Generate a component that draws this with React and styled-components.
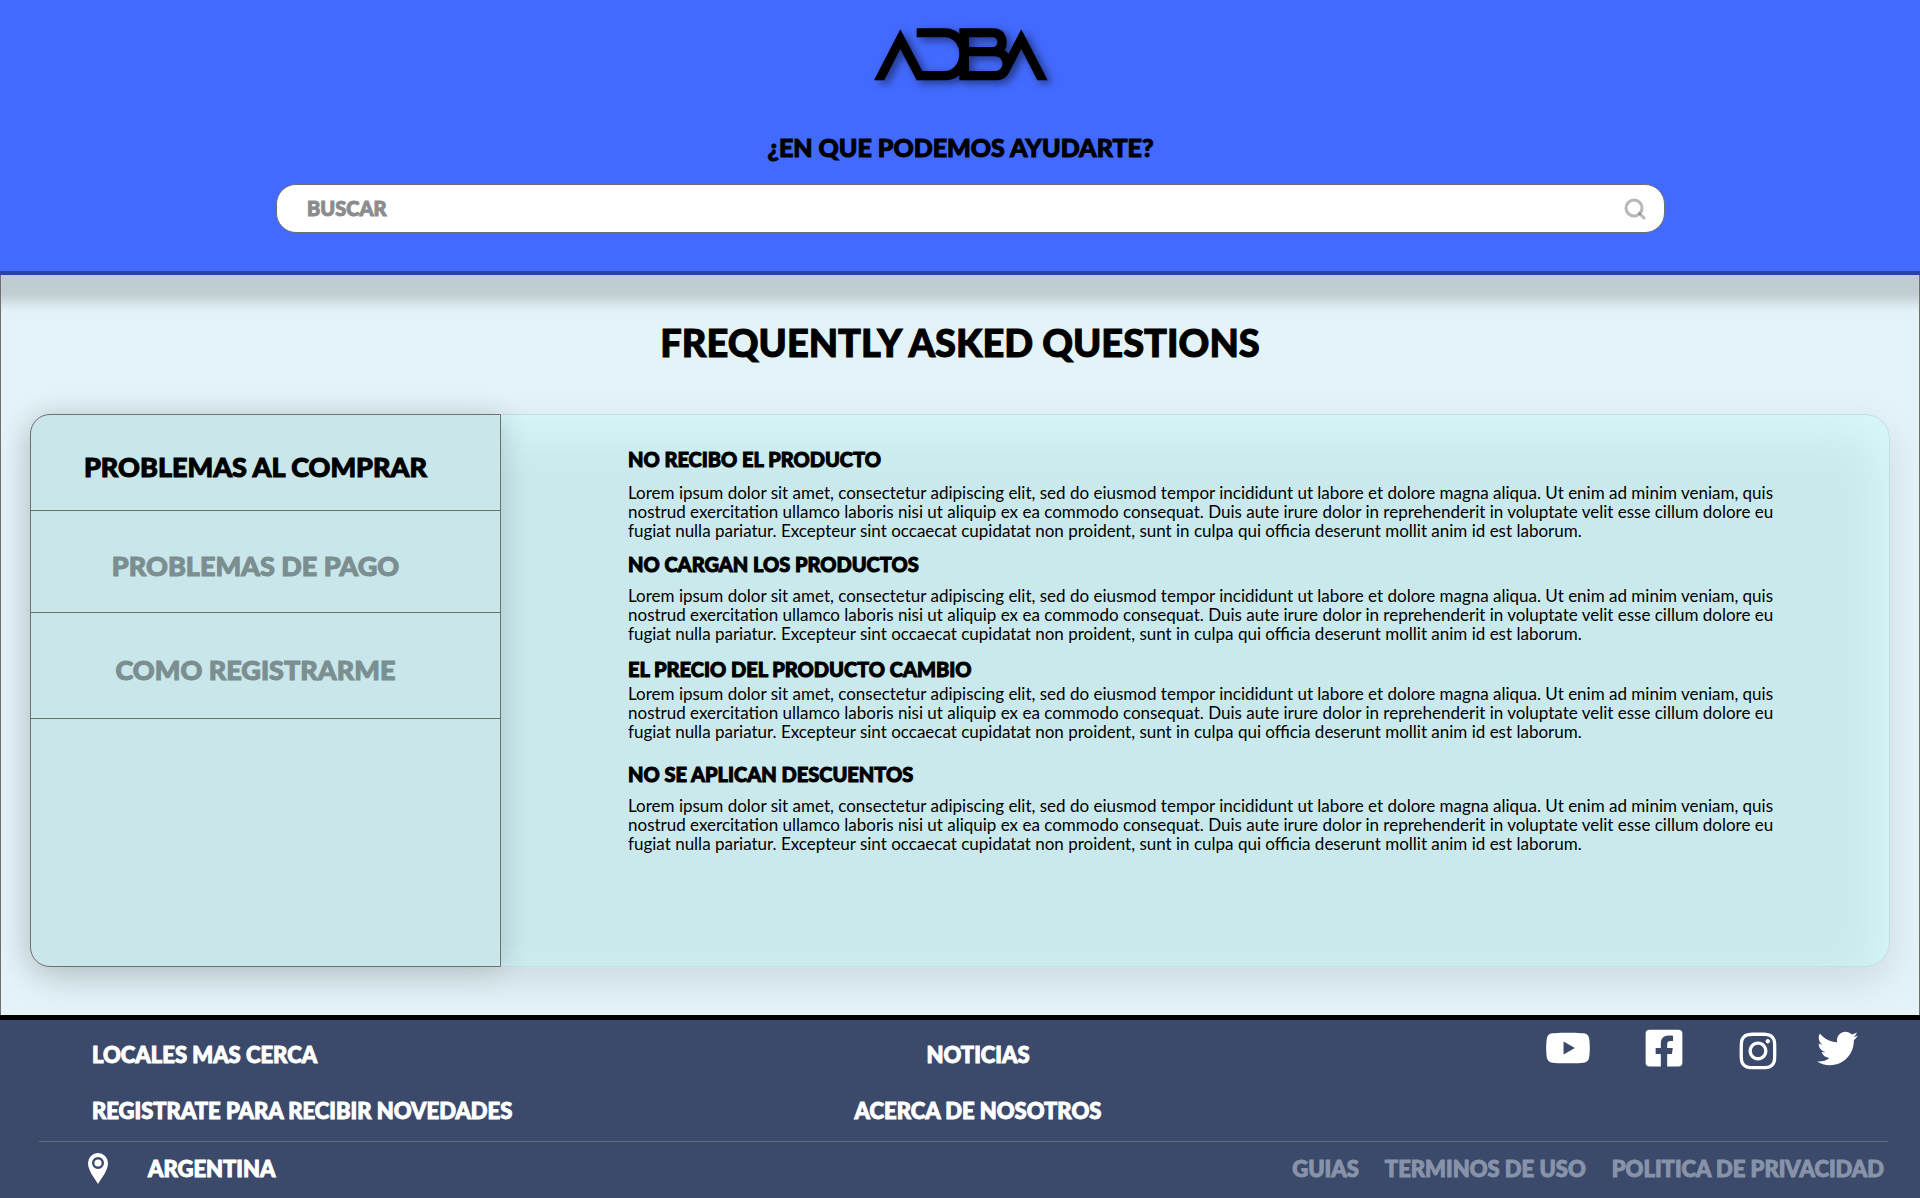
import React from "react";
import styled, { createGlobalStyle, css } from "styled-components";
import { FaYoutube, FaFacebookSquare, FaInstagram, FaTwitter } from "react-icons/fa";

const GlobalStyle = createGlobalStyle`
  * { box-sizing: border-box; }
  body { margin: 0; background: #e4f3f8; color: #000; font-family: Lato, "Open Sans", sans-serif; }
  h1, h2, h3, p { margin: 0; padding: 0; }
`;

const heavy = css`
  font-weight: 900;
  -webkit-text-stroke: 1px currentColor;
`;

const Page = styled.div`
  display: flex;
  flex-direction: column;
  min-height: 100vh;
  overflow-x: hidden;
`;

const Header = styled.header`
  display: flex;
  flex-direction: column;
  align-items: center;
  padding: 21px 255px 38px 276px;
  background: #436aff;
  border-bottom: 4px solid #2a41a5;
  box-shadow: 0 15px 12px 12px rgba(0, 0, 0, 0.16);
`;

const Logo = styled.svg`
  display: block;
  width: 183px;
  height: 67px;
  margin-right: 10px;
  overflow: visible;
  filter: drop-shadow(4px 3px 4px rgba(0, 0, 0, 0.5));
`;

const Prompt = styled.h2`
  ${heavy}
  margin: 43px 20px 0 0;
  font-size: 25px;
  line-height: 32px;
`;

const SearchBox = styled.form`
  display: flex;
  align-items: center;
  width: 100%;
  height: 49px;
  margin-top: 21px;
  padding: 0 18px 0 30px;
  background: #fff;
  border: 1px solid #707070;
  border-radius: 20px;
`;

const SearchInput = styled.input`
  flex: 1;
  min-width: 0;
  border: 0;
  outline: 0;
  padding: 0 0 2px;
  background: transparent;
  font: 20px/24px Lato, sans-serif;
  ${heavy}
  color: #000;
  &::placeholder { color: #8c8c8c; opacity: 1; -webkit-text-stroke: 1px #8c8c8c; }
`;

const SearchButton = styled.button`
  display: flex;
  padding: 0;
  border: 0;
  background: none;
  cursor: pointer;
`;

const Main = styled.main`
  flex: 1;
  padding: 43px 29px 48px;
  border: solid #707070;
  border-width: 0 1px;
`;

const Title = styled.h1`
  ${heavy}
  font-size: 38px;
  line-height: 48px;
  text-align: center;
`;

const Panel = styled.section`
  display: flex;
  min-height: 553px;
  margin-top: 48px;
  border-radius: 25px;
  background: #c9e9ec;
  box-shadow: 0 14px 40px rgba(0, 0, 0, 0.1), inset 0 0 0 1px #c1e0e4, inset -10px 20px 50px #d8f8fa;
`;

const Topics = styled.nav`
  flex: 0 0 471px;
  border: 1px solid #707070;
  border-radius: 20px 0 0 20px;
  background: #c9e6ea;
  box-shadow: 0 3px 30px rgba(0, 0, 0, 0.16);
`;

const Topic = styled.button`
  display: block;
  width: 100%;
  height: ${(p) => p.$height}px;
  padding: 8px 20px 0 0;
  border: 0;
  border-bottom: 1px solid #707070;
  background: none;
  font: 27px/34px Lato, sans-serif;
  ${heavy}
  text-align: center;
  color: ${(p) => (p.$active ? "#000" : "#7b8e90")};
  cursor: pointer;
`;

const Answers = styled.div`
  flex: 1;
  padding: 33px 90px 40px 127px;
`;

const Question = styled.h3`
  ${heavy}
  font-size: 20px;
  line-height: 24px;
`;

const Answer = styled.p`
  font-size: 17px;
  line-height: 19px;
  margin: ${(p) => p.$before}px 0 ${(p) => p.$after}px;
`;

const Footer = styled.footer`
  padding: 4px 32px 6px 39px;
  border-top: 5px solid #000;
  background: #3b4a6b;
  color: #fff;
`;

const FooterTop = styled.div`
  display: grid;
  grid-template-columns: 1fr auto 1fr;
  align-items: start;
  padding: 0 24px 0 53px;
  height: 117px;
`;

const FooterBottom = styled.div`
  display: flex;
  align-items: center;
  justify-content: space-between;
  height: 51px;
  padding: 3px 4px 0 49px;
  border-top: 1px solid #656b79;
`;

const LinkColumn = styled.div`
  display: flex;
  flex-direction: column;
  align-items: ${(p) => (p.$center ? "center" : "flex-start")};
  gap: 32px;
  padding-top: 19px;
`;

const FooterLink = styled.a`
  ${heavy}
  font-size: 22px;
  line-height: 24px;
  text-decoration: none;
  white-space: nowrap;
  color: ${(p) => (p.$muted ? "#8893aa" : "#fff")};
`;

const Country = styled.div`
  display: flex;
  align-items: center;
  gap: 40px;
`;

const Legal = styled.div`
  display: flex;
  gap: 26px;
`;

const Social = styled.div`
  display: flex;
  align-items: center;
  justify-content: flex-end;
  gap: 38px;
  height: 48px;
  padding-right: 6px;
`;

const SocialLink = styled.a`
  display: flex;
  align-self: ${(p) => (p.$low ? "flex-end" : "center")};
  margin-right: ${(p) => (p.$wide ? 14 : 0)}px;
  color: #fff;
`;

const LINES = [
  "Lorem ipsum dolor sit amet, consectetur adipiscing elit, sed do eiusmod tempor incididunt ut labore et dolore magna aliqua. Ut enim ad minim veniam, quis",
  "nostrud exercitation ullamco laboris nisi ut aliquip ex ea commodo consequat. Duis aute irure dolor in reprehenderit in voluptate velit esse cillum dolore eu",
  "fugiat nulla pariatur. Excepteur sint occaecat cupidatat non proident, sunt in culpa qui officia deserunt mollit anim id est laborum.",
];

const FAQ = [
  { q: "NO RECIBO EL PRODUCTO", before: 12, after: 12 },
  { q: "NO CARGAN LOS PRODUCTOS", before: 10, after: 14 },
  { q: "EL PRECIO DEL PRODUCTO CAMBIO", before: 3, after: 21 },
  { q: "NO SE APLICAN DESCUENTOS", before: 10, after: 0 },
];

export default function App() {
  return (
    <Page>
      <GlobalStyle />
      <Header>
        <Logo viewBox="342 63 549 201" role="img" aria-label="ADBA">
          <path
            fillRule="evenodd"
            d="M342 241L421 88L487 213H555C578 213 598 192 598 162C598 132 578 112 555 112H470V85H555C572 85 586 91 598 101V85H700C728 85 740 105 740 128C740 140 737 147 733 151C740 154 743 158 745 162L784 88L863 241H832L784 147L750 212C741 232 728 241 708 241H598V226C585 237 570 241 550 241H470L421 147L373 241ZM627 112V141H698C717 141 717 112 698 112ZM627 169V213H704C735 213 735 169 704 169Z"
          />
        </Logo>
        <Prompt>¿EN QUE PODEMOS AYUDARTE?</Prompt>
        <SearchBox role="search" onSubmit={(e) => e.preventDefault()}>
          <SearchInput type="search" aria-label="Buscar" placeholder="BUSCAR" />
          <SearchButton type="submit" aria-label="Buscar">
            <svg width="22" height="22" viewBox="0 0 22 22" fill="none" stroke="#707070" strokeOpacity="0.5" strokeWidth="3" strokeLinecap="round">
              <circle cx="10" cy="10" r="8" />
              <path d="M15.5 15.5L20 20" />
            </svg>
          </SearchButton>
        </SearchBox>
      </Header>
      <Main>
        <Title>FREQUENTLY ASKED QUESTIONS</Title>
        <Panel>
          <Topics aria-label="Temas">
            <Topic type="button" $height={96} $active>PROBLEMAS AL COMPRAR</Topic>
            <Topic type="button" $height={102}>PROBLEMAS DE PAGO</Topic>
            <Topic type="button" $height={106}>COMO REGISTRARME</Topic>
          </Topics>
          <Answers>
            {FAQ.map((f) => (
              <React.Fragment key={f.q}>
                <Question>{f.q}</Question>
                <Answer $before={f.before} $after={f.after}>
                  {LINES[0]}<br />{LINES[1]}<br />{LINES[2]}
                </Answer>
              </React.Fragment>
            ))}
          </Answers>
        </Panel>
      </Main>
      <Footer>
        <FooterTop>
          <LinkColumn>
            <FooterLink href="#locales">LOCALES MAS CERCA</FooterLink>
            <FooterLink href="#registro">REGISTRATE PARA RECIBIR NOVEDADES</FooterLink>
          </LinkColumn>
          <LinkColumn $center>
            <FooterLink href="#noticias">NOTICIAS</FooterLink>
            <FooterLink href="#nosotros">ACERCA DE NOSOTROS</FooterLink>
          </LinkColumn>
          <Social>
            <SocialLink $wide href="#youtube" aria-label="YouTube"><FaYoutube size={46} /></SocialLink>
            <SocialLink $wide href="#facebook" aria-label="Facebook"><FaFacebookSquare size={42} /></SocialLink>
            <SocialLink $low href="#instagram" aria-label="Instagram"><FaInstagram size={42} /></SocialLink>
            <SocialLink href="#twitter" aria-label="Twitter"><FaTwitter size={41} /></SocialLink>
          </Social>
        </FooterTop>
        <FooterBottom>
          <Country>
            <svg width="20" height="31" viewBox="0 0 20 31" fill="#fff" aria-hidden="true">
              <path fillRule="evenodd" d="M10 0A10 10 0 0 0 0 10C0 17 5 23 10 31C15 23 20 17 20 10A10 10 0 0 0 10 0ZM10 4a6 6 0 1 1 0 12a6 6 0 1 1 0-12Z" />
              <circle cx="10" cy="10" r="3.6" />
            </svg>
            <FooterLink href="#pais">ARGENTINA</FooterLink>
          </Country>
          <Legal>
            <FooterLink $muted href="#guias">GUIAS</FooterLink>
            <FooterLink $muted href="#terminos">TERMINOS DE USO</FooterLink>
            <FooterLink $muted href="#privacidad">POLITICA DE PRIVACIDAD</FooterLink>
          </Legal>
        </FooterBottom>
      </Footer>
    </Page>
  );
}
